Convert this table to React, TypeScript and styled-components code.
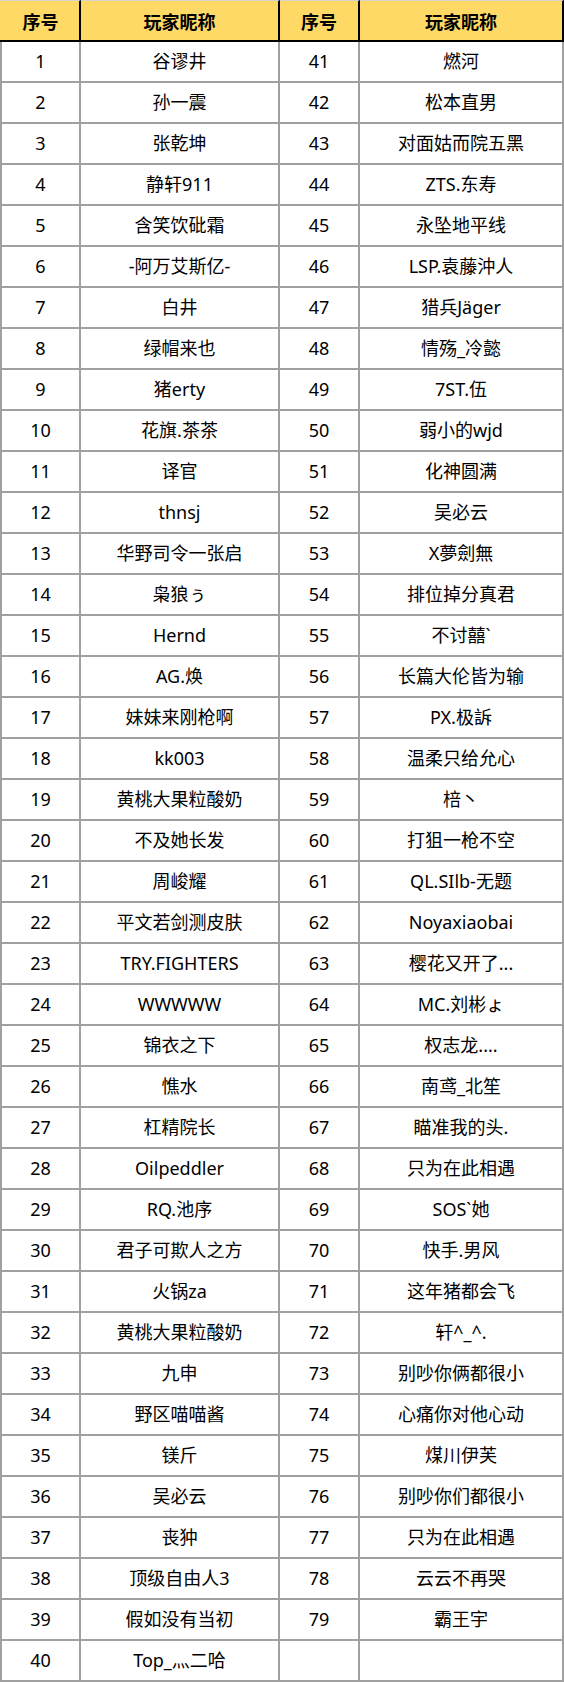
import { Fragment } from "react";
import styled, { createGlobalStyle } from "styled-components";

const GlobalStyle = createGlobalStyle`
  html, body {
    margin: 0;
    padding: 0;
    background: #ffffff;
  }
  body {
    font-family: "Noto Sans", "Noto Sans CJK SC", sans-serif;
    color: #000000;
  }
`;

// left column pairs (1-40), right column pairs (41-79)
const players: [number, string, number | null, string][] = [
  [1, "谷谬井", 41, "燃河"],
  [2, "孙一震", 42, "松本直男"],
  [3, "张乾坤", 43, "对面姑而院五黑"],
  [4, "静轩911", 44, "ZTS.东寿"],
  [5, "含笑饮砒霜", 45, "永坠地平线"],
  [6, "-阿万艾斯亿-", 46, "LSP.袁藤沖人"],
  [7, "白井", 47, "猎兵Jäger"],
  [8, "绿帽来也", 48, "情殇_冷懿"],
  [9, "猪erty", 49, "7ST.伍"],
  [10, "花旗.茶茶", 50, "弱小的wjd"],
  [11, "译官", 51, "化神圆满"],
  [12, "thnsj", 52, "吴必云"],
  [13, "华野司令一张启", 53, "X夢劍無"],
  [14, "枭狼ぅ", 54, "排位掉分真君"],
  [15, "Hernd", 55, "不讨囍`"],
  [16, "AG.焕", 56, "长篇大伦皆为输"],
  [17, "妹妹来刚枪啊", 57, "PX.极訴"],
  [18, "kk003", 58, "温柔只给允心"],
  [19, "黄桃大果粒酸奶", 59, "棓丶"],
  [20, "不及她长发", 60, "打狙一枪不空"],
  [21, "周峻耀", 61, "QL.SIlb-无题"],
  [22, "平文若剑测皮肤", 62, "Noyaxiaobai"],
  [23, "TRY.FIGHTERS", 63, "樱花又开了..."],
  [24, "WWWWW", 64, "MC.刘彬ょ"],
  [25, "锦衣之下", 65, "权志龙...."],
  [26, "憔水", 66, "南鸢_北笙"],
  [27, "杠精院长", 67, "瞄准我的头."],
  [28, "Oilpeddler", 68, "只为在此相遇"],
  [29, "RQ.池序", 69, "SOS`她"],
  [30, "君子可欺人之方", 70, "快手.男风"],
  [31, "火锅za", 71, "这年猪都会飞"],
  [32, "黄桃大果粒酸奶", 72, "轩^_^."],
  [33, "九申", 73, "别吵你俩都很小"],
  [34, "野区喵喵酱", 74, "心痛你对他心动"],
  [35, "镁斤", 75, "煤川伊芙"],
  [36, "吴必云", 76, "别吵你们都很小"],
  [37, "丧狆", 77, "只为在此相遇"],
  [38, "顶级自由人3", 78, "云云不再哭"],
  [39, "假如没有当初", 79, "霸王宇"],
  [40, "Top_灬二哈", null, ""],
];

const Sheet = styled.div`
  width: 564px;
  display: grid;
  grid-template-columns: 81px 199px 80px 204px;
`;

const HeadCell = styled.div<{ first?: boolean }>`
  box-sizing: border-box;
  height: 42px;
  display: flex;
  align-items: center;
  justify-content: center;
  background: #ffd966;
  border-top: 1px solid #d4d4d4;
  border-bottom: 2px solid #000000;
  border-right: 2px solid #000000;
  padding-left: ${(p) => (p.first ? "2px" : "0")};
  font-family: "Noto Sans CJK SC", sans-serif;
  font-weight: 700;
  font-size: 18px;
  line-height: 1;
`;

const Cell = styled.div<{ first?: boolean }>`
  box-sizing: border-box;
  height: 41px;
  display: flex;
  align-items: center;
  justify-content: center;
  border-bottom: 2px solid #a0a0a0;
  border-right: 2px solid #a0a0a0;
  border-left: ${(p) => (p.first ? "2px solid #a0a0a0" : "none")};
  font-size: 18px;
  line-height: 1;
  white-space: nowrap;
  padding-bottom: 1px;
`;

export default function App() {
  return (
    <>
      <GlobalStyle />
      <Sheet>
        <HeadCell first>序号</HeadCell>
        <HeadCell>玩家昵称</HeadCell>
        <HeadCell>序号</HeadCell>
        <HeadCell>玩家昵称</HeadCell>
        {players.map(([n1, name1, n2, name2]) => (
          <Fragment key={n1}>
            <Cell first>{n1}</Cell>
            <Cell>{name1}</Cell>
            <Cell>{n2 ?? ""}</Cell>
            <Cell>{name2}</Cell>
          </Fragment>
        ))}
      </Sheet>
    </>
  );
}
